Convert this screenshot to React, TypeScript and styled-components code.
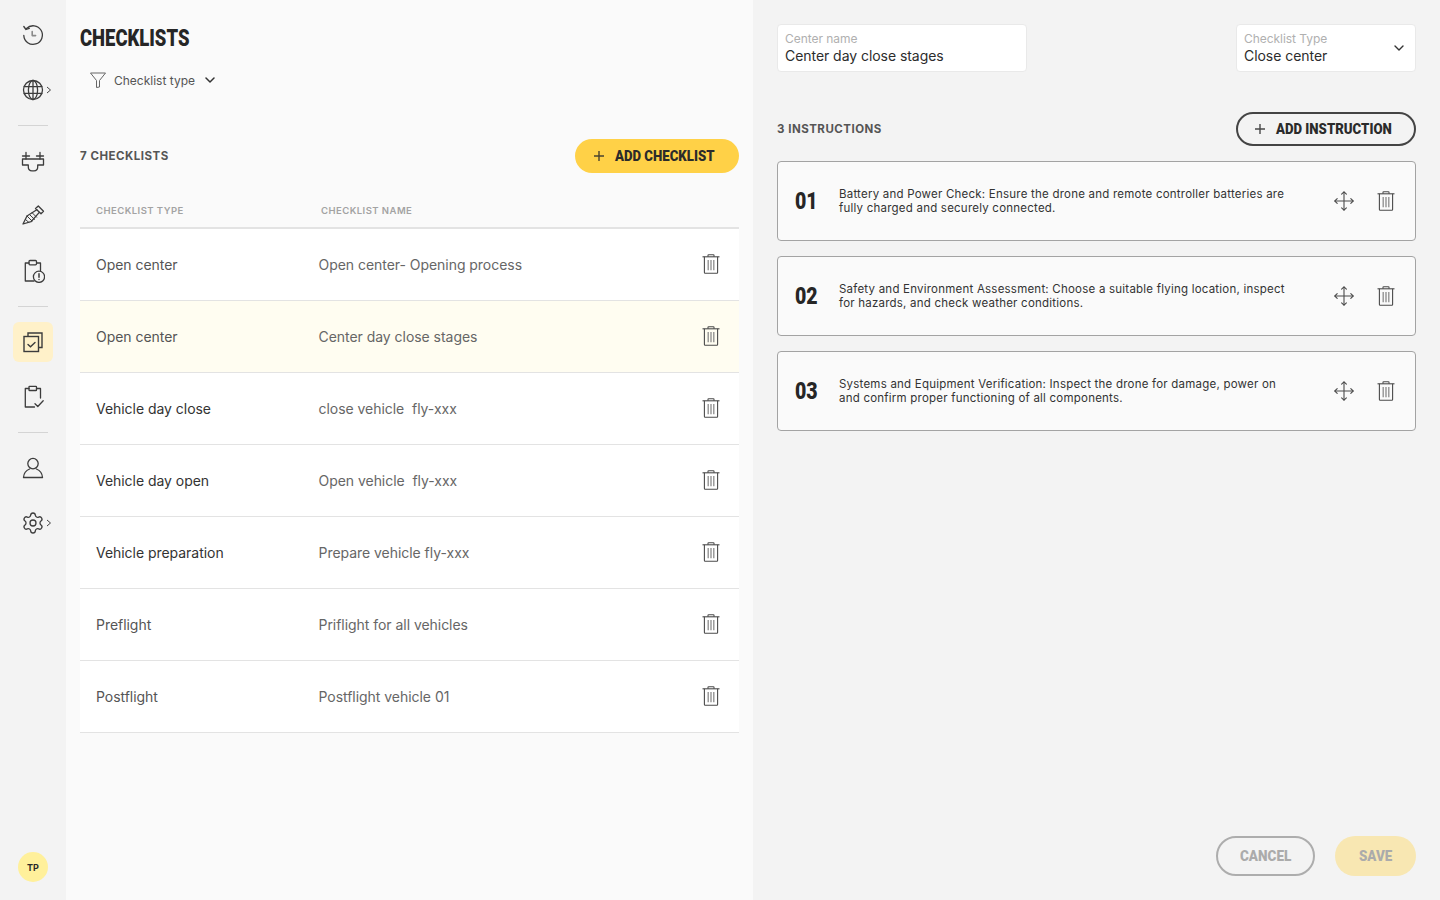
import styled, { createGlobalStyle } from "styled-components";
import { Settings } from "lucide-react";

const GlobalStyle = createGlobalStyle`
  html, body {
    margin: 0;
    padding: 0;
    height: 100%;
    font-family: Inter, "Noto Sans", sans-serif;
    color: #2a2a2a;
  }
  * {
    box-sizing: border-box;
  }
`;

const Page = styled.div`
  display: flex;
  width: 1440px;
  height: 900px;
  overflow: hidden;
`;

const Sidebar = styled.nav`
  width: 66px;
  height: 100%;
  background: #f3f3f3;
  display: flex;
  flex-direction: column;
  align-items: center;
  padding-top: 15px;
`;

const NavItem = styled.div<{ $active?: boolean }>`
  position: relative;
  width: 40px;
  height: 40px;
  display: flex;
  align-items: center;
  justify-content: center;
  border-radius: 6px;
  margin-bottom: 15px;
  color: #3c3c3c;
  background: ${(p) => (p.$active ? "#fff1c9" : "transparent")};
`;

const NavGroup = styled.div`
  display: contents;
`;

const NavArrow = styled.svg`
  position: absolute;
  left: 33px;
  top: 16px;
`;

const NavDivider = styled.div`
  width: 30px;
  height: 1px;
  background: #d4d4d4;
  margin: 0 0 15px;
`;

const Avatar = styled.div`
  margin-top: auto;
  margin-bottom: 18px;
  width: 30px;
  height: 30px;
  border-radius: 50%;
  background: #fff09b;
  display: flex;
  align-items: center;
  justify-content: center;
  font-size: 9px;
  font-weight: 700;
  letter-spacing: 0.2px;
`;

const ListPanel = styled.section`
  width: 687px;
  height: 100%;
  background: #fafafa;
  padding: 24px 14px 0;
`;

const Condensed = styled.span<{ $w: number; $scale: number }>`
  display: inline-block;
  width: ${(p) => p.$w}px;
  white-space: nowrap;
  font-family: Roboto, sans-serif;
  font-weight: 900;
  & > span {
    display: inline-block;
    transform: scaleX(${(p) => p.$scale});
    transform-origin: left center;
  }
`;

const Title = styled.h1`
  margin: 0;
  height: 28px;
  font-size: 23.5px;
  line-height: 28px;
  font-weight: 900;
  color: #262626;
`;

const FilterRow = styled.div`
  display: flex;
  align-items: center;
  margin: 15px 0 0 10px;
  height: 26px;
  font-size: 12px;
  color: #555;
`;

const FilterLabel = styled.span`
  margin: 0 10px 0 8px;
`;

const CountRow = styled.div`
  display: flex;
  align-items: center;
  justify-content: space-between;
  margin-top: 46px;
  height: 34px;
`;

const CountLabel = styled.span`
  font-size: 11.5px;
  font-weight: 700;
  letter-spacing: 0.5px;
  color: #555;
`;

const PillButton = styled.button<{ $variant: "primary" | "outline" | "ghost" | "muted" }>`
  display: flex;
  align-items: center;
  justify-content: center;
  gap: 10px;
  border-radius: 22px;
  cursor: pointer;
  font-size: 15px;
  padding: 0;
  height: ${(p) => (p.$variant === "ghost" || p.$variant === "muted" ? "40px" : "34px")};
  color: ${(p) => (p.$variant === "ghost" || p.$variant === "muted" ? "#ababab" : "#2b2b2b")};
  background: ${(p) =>
    p.$variant === "primary" ? "#ffd147" : p.$variant === "muted" ? "#f8e7b2" : "transparent"};
  border: ${(p) =>
    p.$variant === "outline"
      ? "2px solid #444"
      : p.$variant === "ghost"
        ? "2px solid #adadad"
        : "none"};
`;

const AddChecklist = styled(PillButton)`
  width: 164px;
  padding-right: 6px;
`;

const TableHead = styled.div`
  display: grid;
  grid-template-columns: 225px 1fr;
  align-items: center;
  margin-top: 21px;
  height: 35px;
  padding: 0 0 1px 16px;
  border-bottom: 2px solid #e3e3e3;
  font-size: 9.5px;
  font-weight: 600;
  letter-spacing: 0.45px;
  color: #a3a3a3;
`;

const Row = styled.div<{ $selected?: boolean }>`
  display: grid;
  grid-template-columns: 222.5px 1fr auto;
  align-items: center;
  height: 72px;
  padding: 0 19px 0 16px;
  background: ${(p) => (p.$selected ? "#fffdf1" : "#fff")};
  border-bottom: 1px solid #e3e3e3;
  font-size: 14px;
  letter-spacing: -0.04px;
`;

const RowType = styled.span<{ $dark?: boolean }>`
  color: ${(p) => (p.$dark ? "#333" : "#555")};
`;

const RowName = styled.span`
  color: #666;
  white-space: pre;
`;

const IconHolder = styled.span`
  display: flex;
  color: #4b4b4b;
`;

const RowIcon = styled(IconHolder)`
  margin-bottom: 1px;
`;

const DetailPanel = styled.section`
  flex: 1;
  height: 100%;
  background: #f3f3f3;
  padding: 24px 24px 24px;
  display: flex;
  flex-direction: column;
`;

const FieldRow = styled.div`
  display: flex;
  justify-content: space-between;
`;

const Field = styled.div<{ $w: number }>`
  position: relative;
  width: ${(p) => p.$w}px;
  height: 48px;
  background: #fff;
  border: 1px solid #e9e9e9;
  border-radius: 4px;
  padding: 7px 7px 0;
`;

const FieldLabel = styled.div`
  font-size: 12px;
  line-height: 14px;
  letter-spacing: -0.05px;
  color: #b0b0b0;
`;

const FieldValue = styled.div`
  font-size: 14px;
  line-height: 19px;
  letter-spacing: -0.05px;
  color: #2c2c2c;
`;

const FieldChevron = styled.svg`
  position: absolute;
  right: 11px;
  top: 18px;
`;

const InstructionBar = styled.div`
  display: flex;
  align-items: center;
  justify-content: space-between;
  margin-top: 40px;
  height: 34px;
`;

const AddInstruction = styled(PillButton)`
  width: 180px;
  padding-right: 6px;
`;

const InstructionList = styled.div`
  display: flex;
  flex-direction: column;
  gap: 15px;
  margin-top: 15px;
`;

const Instruction = styled.div`
  display: flex;
  align-items: center;
  height: 80px;
  background: #fafafa;
  border: 1px solid #a3a3a3;
  border-radius: 4px;
  padding: 0 20px 0 17px;
`;

const InstructionNumber = styled.div`
  width: 44px;
  margin-bottom: 1px;
  font-size: 23px;
  color: #262626;
`;

const InstructionText = styled.p`
  flex: 1;
  margin: 0;
  max-width: 450px;
  font-size: 11.5px;
  line-height: 14px;
  letter-spacing: 0.22px;
  color: #333;
`;

const InstructionActions = styled.div`
  margin-left: auto;
  display: flex;
  align-items: center;
  gap: 23px;
`;

const Footer = styled.div`
  margin-top: auto;
  display: flex;
  justify-content: flex-end;
  gap: 20px;
`;

const CancelButton = styled(PillButton)`
  width: 99px;
`;

const SaveButton = styled(PillButton)`
  width: 81px;
`;

const stroke = {
  fill: "none",
  stroke: "currentColor",
  strokeWidth: 1.3,
  strokeLinecap: "round" as const,
  strokeLinejoin: "round" as const,
};

const HistoryIcon = () => (
  <svg width="24" height="24" viewBox="0 0 24 24" {...stroke}>
    <path d="M5.5 5.5 A9.3 9.3 0 1 1 2.8 12.5" />
    <path d="M2.8 3.5 L5 6.5 L8.3 5.4" />
    <path d="M11.2 8.5 V12.6 H14.6" strokeWidth="1.6" stroke="#8a8a8a" />
  </svg>
);

const GlobeIcon = () => (
  <svg width="24" height="24" viewBox="0 0 24 24" {...stroke}>
    <circle cx="12" cy="12" r="9.5" />
    <ellipse cx="12" cy="12" rx="4.6" ry="9.5" />
    <path d="M12 2.5 V21.5 M3.2 8.6 H20.8 M3.2 15.4 H20.8" />
  </svg>
);

const DroneIcon = () => (
  <svg width="24" height="24" viewBox="0 0 24 24" {...stroke}>
    <path d="M1.5 7 H8.5 M15.5 7 H22.5 M5 3.5 V10 M19 3.5 V10" />
    <path d="M1.5 10 H22.5 V16 H16.7 V18 Q16.7 21.8 13 21.8 H11 Q7.3 21.8 7.3 18 V16 H1.5 Z" />
  </svg>
);

const ScrewIcon = () => (
  <svg width="24" height="24" viewBox="0 0 24 24" {...stroke}>
    <path d="M14.5 4.5 L17.3 2 L22.5 7.3 L20 9.8 Z" />
    <path d="M15.8 5.8 L6 12 L2 20 L10 17.7 L18.3 8.4" />
    <path d="M6 12 L11 17 M8.5 10.5 L13.5 15.4 M11.2 8.8 L15.6 13.2 M4.3 15.3 L7.8 18.4" strokeWidth="1" />
  </svg>
);

const ClipboardAlertIcon = () => (
  <svg width="24" height="24" viewBox="0 0 24 24" {...stroke}>
    <path d="M8 4 H4.3 V22 H13" />
    <path d="M16 4 H19.5 V11.5" />
    <rect x="8" y="1.5" width="7.5" height="4.3" rx="1" />
    <circle cx="18" cy="17.8" r="5.6" />
    <path d="M18 14.8 V18.2 M18 20.4 V20.6" strokeWidth="1.5" />
  </svg>
);

const ChecklistsIcon = () => (
  <svg width="24" height="24" viewBox="0 0 24 24" fill="none" stroke="currentColor" strokeWidth="1.4">
    <path d="M7 6.5 V3 H21 V17.5 H17.5" />
    <rect x="3" y="6.5" width="14.5" height="15" />
    <path d="M7 14.5 L9.5 16.8 L14 12.6" strokeLinecap="round" />
  </svg>
);

const ClipboardCheckIcon = () => (
  <svg width="24" height="24" viewBox="0 0 24 24" {...stroke}>
    <path d="M8 3.5 H4.3 V22 H13.5" />
    <path d="M15.5 3.5 H19.5 V13" />
    <rect x="8" y="1.3" width="7.5" height="4.2" rx="0.6" />
    <path d="M14 18.8 L16.8 21.5 L22.2 15.8" />
  </svg>
);

const UserIcon = () => (
  <svg width="24" height="24" viewBox="0 0 24 24" {...stroke}>
    <circle cx="12" cy="7.6" r="5.2" />
    <path d="M2.5 21.5 C2.8 16.5 6.5 13.8 8.6 13 M21.5 21.5 C21.2 16.5 17.5 13.8 15.4 13 M2.5 21.5 H21.5" />
  </svg>
);

const FunnelIcon = () => (
  <svg width="16" height="16" viewBox="0 0 16 16" fill="none" stroke="#666" strokeWidth="1" strokeLinejoin="round">
    <path d="M0.5 1 H15.5 L9.5 8.5 V15 L6.5 15.5 V8.5 Z" />
  </svg>
);

const Chevron = ({ size = 10 }: { size?: number }) => (
  <svg width={size} height={size} viewBox="0 0 10 10" fill="none" stroke="#333" strokeWidth="1.5" strokeLinecap="round" strokeLinejoin="round">
    <path d="M1 3 L5 7 L9 3" />
  </svg>
);

const PlusIcon = () => (
  <svg width="12" height="12" viewBox="0 0 12 12" fill="none" stroke="currentColor" strokeWidth="1.4" opacity="0.85">
    <path d="M6 1 V11 M1 6 H11" />
  </svg>
);

const TrashIcon = () => (
  <svg width="18" height="20" viewBox="0 0 18 20" fill="none" stroke="currentColor" strokeWidth="1.1">
    <path d="M0.5 2.8 H17.5" />
    <path d="M6 2.8 V1.3 Q6 0.8 6.6 0.8 H11.4 Q12 0.8 12 1.3 V2.8" />
    <path d="M2.4 2.8 V18.5 Q2.4 19.2 3.1 19.2 H14.9 Q15.6 19.2 15.6 18.5 V2.8" />
    <path d="M6.2 6 V16.2 M9 6 V16.2 M11.8 6 V16.2" stroke="#8c8c8c" strokeWidth="1.3" />
  </svg>
);

const MoveIcon = () => (
  <svg width="20" height="20" viewBox="0 0 20 20" fill="none" stroke="currentColor" strokeWidth="1.1" strokeLinecap="round" strokeLinejoin="round">
    <path d="M10 1 V19 M1 10 H19" />
    <path d="M7.6 3.2 L10 0.8 L12.4 3.2 M7.6 16.8 L10 19.2 L12.4 16.8 M3.2 7.6 L0.8 10 L3.2 12.4 M16.8 7.6 L19.2 10 L16.8 12.4" />
  </svg>
);

const navGroups = [
  [
    { icon: <HistoryIcon /> },
    { icon: <GlobeIcon />, arrow: true },
  ],
  [
    { icon: <DroneIcon /> },
    { icon: <ScrewIcon /> },
    { icon: <ClipboardAlertIcon /> },
  ],
  [
    { icon: <ChecklistsIcon />, active: true },
    { icon: <ClipboardCheckIcon /> },
  ],
  [
    { icon: <UserIcon /> },
    { icon: <Settings size={24} strokeWidth={1.3} />, arrow: true },
  ],
];

const checklists = [
  { type: "Open center", name: "Open center- Opening process" },
  { type: "Open center", name: "Center day close stages", selected: true },
  { type: "Vehicle day close", name: "close vehicle  fly-xxx", dark: true },
  { type: "Vehicle day open", name: "Open vehicle  fly-xxx", dark: true },
  { type: "Vehicle preparation", name: "Prepare vehicle fly-xxx", dark: true },
  { type: "Preflight", name: "Priflight for all vehicles" },
  { type: "Postflight", name: "Postflight vehicle 01" },
];

const instructions = [
  "Battery and Power Check: Ensure the drone and remote controller batteries are fully charged and securely connected.",
  "Safety and Environment Assessment: Choose a suitable flying location, inspect for hazards, and check weather conditions.",
  "Systems and Equipment Verification: Inspect the drone for damage, power on and confirm proper functioning of all components.",
];

function App() {
  return (
    <Page>
      <GlobalStyle />
      <Sidebar>
        {navGroups.map((group, i) => (
          <NavGroup key={i}>
            {i > 0 && <NavDivider />}
            {group.map((item, j) => (
              <NavItem key={j} $active={item.active}>
                {item.icon}
                {item.arrow && (
                  <NavArrow width="6" height="8" viewBox="0 0 6 8" fill="none" stroke="#444" strokeWidth="1">
                    <path d="M1 1 L4.5 4 L1 7" />
                  </NavArrow>
                )}
              </NavItem>
            ))}
          </NavGroup>
        ))}
        <Avatar>TP</Avatar>
      </Sidebar>

      <ListPanel>
        <Title>
          <Condensed $w={110} $scale={0.785}>
            <span>CHECKLISTS</span>
          </Condensed>
        </Title>
        <FilterRow>
          <FunnelIcon />
          <FilterLabel>Checklist type</FilterLabel>
          <Chevron />
        </FilterRow>
        <CountRow>
          <CountLabel>7 CHECKLISTS</CountLabel>
          <AddChecklist $variant="primary">
            <PlusIcon />
            <Condensed $w={100} $scale={0.88}>
              <span>ADD CHECKLIST</span>
            </Condensed>
          </AddChecklist>
        </CountRow>
        <TableHead>
          <span>CHECKLIST TYPE</span>
          <span>CHECKLIST NAME</span>
        </TableHead>
        {checklists.map((c) => (
          <Row key={c.name} $selected={c.selected}>
            <RowType $dark={c.dark}>{c.type}</RowType>
            <RowName>{c.name}</RowName>
            <RowIcon>
              <TrashIcon />
            </RowIcon>
          </Row>
        ))}
      </ListPanel>

      <DetailPanel>
        <FieldRow>
          <Field $w={250}>
            <FieldLabel>Center name</FieldLabel>
            <FieldValue>Center day close stages</FieldValue>
          </Field>
          <Field $w={180}>
            <FieldLabel>Checklist Type</FieldLabel>
            <FieldValue>Close center</FieldValue>
            <FieldChevron width="10" height="10" viewBox="0 0 10 10" fill="none" stroke="#333" strokeWidth="1.4" strokeLinecap="round" strokeLinejoin="round">
              <path d="M1 3 L5 7 L9 3" />
            </FieldChevron>
          </Field>
        </FieldRow>
        <InstructionBar>
          <CountLabel>3 INSTRUCTIONS</CountLabel>
          <AddInstruction $variant="outline">
            <PlusIcon />
            <Condensed $w={117} $scale={0.88}>
              <span>ADD INSTRUCTION</span>
            </Condensed>
          </AddInstruction>
        </InstructionBar>
        <InstructionList>
          {instructions.map((text, i) => (
            <Instruction key={i}>
              <InstructionNumber>
                <Condensed $w={24} $scale={0.85}>
                  <span>0{i + 1}</span>
                </Condensed>
              </InstructionNumber>
              <InstructionText>{text}</InstructionText>
              <InstructionActions>
                <IconHolder>
                  <MoveIcon />
                </IconHolder>
                <IconHolder>
                  <TrashIcon />
                </IconHolder>
              </InstructionActions>
            </Instruction>
          ))}
        </InstructionList>
        <Footer>
          <CancelButton $variant="ghost">
            <Condensed $w={51} $scale={0.9}>
              <span>CANCEL</span>
            </Condensed>
          </CancelButton>
          <SaveButton $variant="muted">
            <Condensed $w={33} $scale={0.89}>
              <span>SAVE</span>
            </Condensed>
          </SaveButton>
        </Footer>
      </DetailPanel>
    </Page>
  );
}

export default App;
